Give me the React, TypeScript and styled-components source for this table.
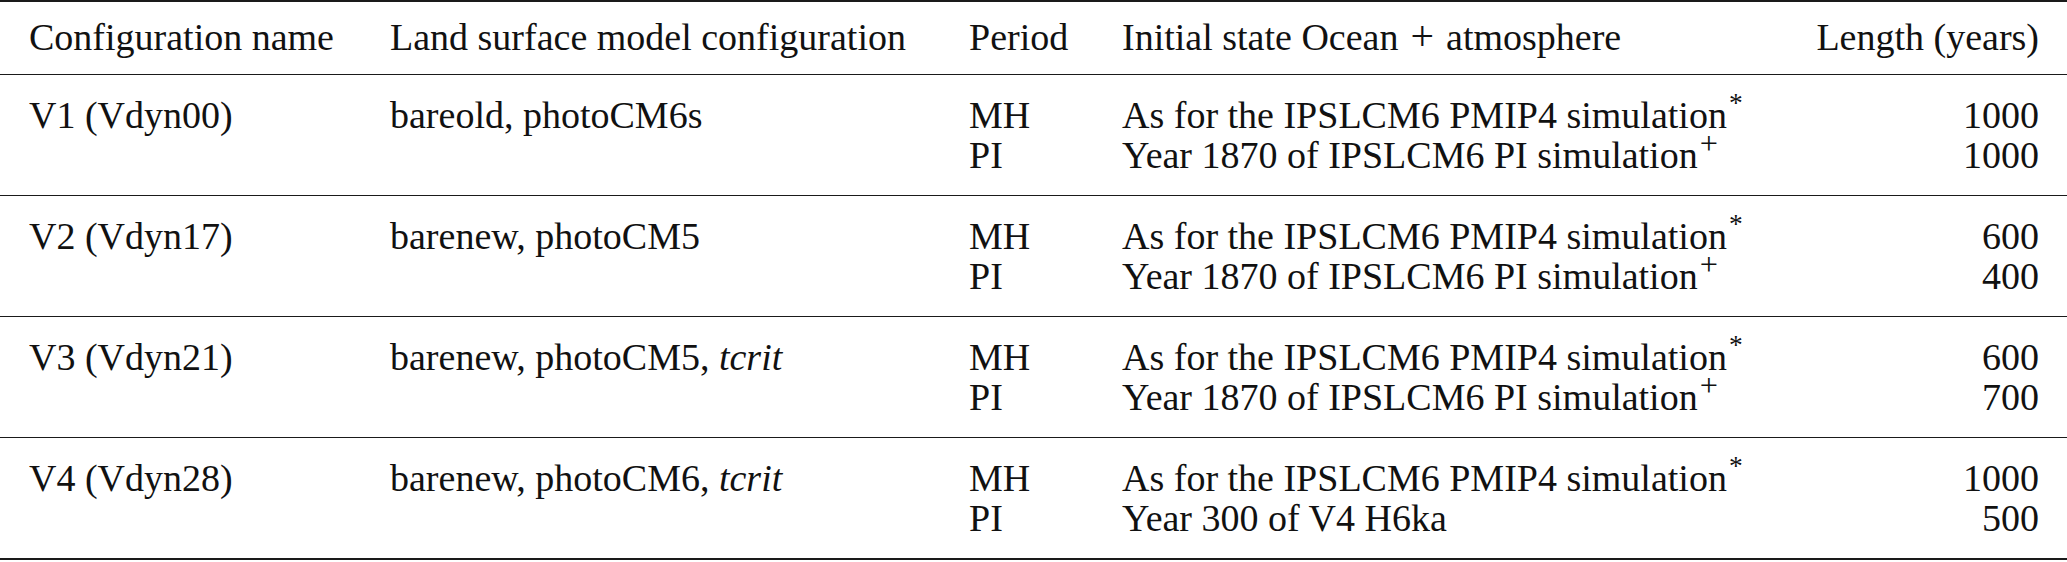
import React from "react";
import styled, { createGlobalStyle } from "styled-components";

const GlobalStyle = createGlobalStyle`
  html, body {
    margin: 0;
    padding: 0;
    background: #ffffff;
  }
`;

const Table = styled.div`
  width: 2067px;
  border-top: 2px solid #1a1a1a;
  border-bottom: 2px solid #1a1a1a;
  font-family: "Liberation Serif", "DejaVu Serif", "Times New Roman", serif;
  font-size: 38px;
  color: #111111;
`;

const Row = styled.div`
  display: grid;
  grid-template-columns: 361px 579px 153px 1fr auto;
  padding: 0 28px 0 29px;
`;

const HeaderRow = styled(Row)`
  height: 73px;
  align-items: center;
  padding-bottom: 3px;
  box-sizing: border-box;
  border-bottom: 1.5px solid #1a1a1a;
`;

const Group = styled(Row)<{ last?: boolean }>`
  grid-template-rows: 40px 40px;
  align-content: center;
  height: 120px;
  border-bottom: ${({ last }) => (last ? "none" : "1.5px solid #1a1a1a")};
`;

const Cell = styled.div<{ right?: boolean }>`
  line-height: 40px;
  white-space: nowrap;
  text-align: ${({ right }) => (right ? "right" : "left")};
`;

const Sup = styled.sup<{ lift: string; size: string }>`
  font-size: ${({ size }) => size};
  line-height: 0;
  vertical-align: ${({ lift }) => lift};
  margin-left: 2px;
`;

const Plus = styled.span`
  font-size: 1.1em;
  line-height: 0;
  margin: 0 12px;
`;

type Sim = { period: string; init: React.ReactNode; length: number };

type Config = {
  name: string;
  model: React.ReactNode;
  sims: Sim[];
};

const mhInit = (
  <>
    As for the IPSLCM6 PMIP4 simulation
    <Sup lift="0.6em" size="0.72em">
      *
    </Sup>
  </>
);
const piInit = (
  <>
    Year 1870 of IPSLCM6 PI simulation
    <Sup lift="0.42em" size="0.85em">
      +
    </Sup>
  </>
);

const configs: Config[] = [
  {
    name: "V1 (Vdyn00)",
    model: "bareold, photoCM6s",
    sims: [
      { period: "MH", init: mhInit, length: 1000 },
      { period: "PI", init: piInit, length: 1000 },
    ],
  },
  {
    name: "V2 (Vdyn17)",
    model: "barenew, photoCM5",
    sims: [
      { period: "MH", init: mhInit, length: 600 },
      { period: "PI", init: piInit, length: 400 },
    ],
  },
  {
    name: "V3 (Vdyn21)",
    model: (
      <>
        barenew, photoCM5, <i>tcrit</i>
      </>
    ),
    sims: [
      { period: "MH", init: mhInit, length: 600 },
      { period: "PI", init: piInit, length: 700 },
    ],
  },
  {
    name: "V4 (Vdyn28)",
    model: (
      <>
        barenew, photoCM6, <i>tcrit</i>
      </>
    ),
    sims: [
      { period: "MH", init: mhInit, length: 1000 },
      { period: "PI", init: "Year 300 of V4 H6ka", length: 500 },
    ],
  },
];

export default function App() {
  return (
    <>
      <GlobalStyle />
      <Table>
        <HeaderRow>
          <Cell>Configuration name</Cell>
          <Cell>Land surface model configuration</Cell>
          <Cell>Period</Cell>
          <Cell>
            Initial state Ocean<Plus>+</Plus>atmosphere
          </Cell>
          <Cell right>Length (years)</Cell>
        </HeaderRow>
        {configs.map((c, i) => (
          <Group key={c.name} last={i === configs.length - 1}>
            <Cell>{c.name}</Cell>
            <Cell>{c.model}</Cell>
            <Cell>{c.sims[0].period}</Cell>
            <Cell>{c.sims[0].init}</Cell>
            <Cell right>{c.sims[0].length}</Cell>
            <Cell />
            <Cell />
            <Cell>{c.sims[1].period}</Cell>
            <Cell>{c.sims[1].init}</Cell>
            <Cell right>{c.sims[1].length}</Cell>
          </Group>
        ))}
      </Table>
    </>
  );
}
